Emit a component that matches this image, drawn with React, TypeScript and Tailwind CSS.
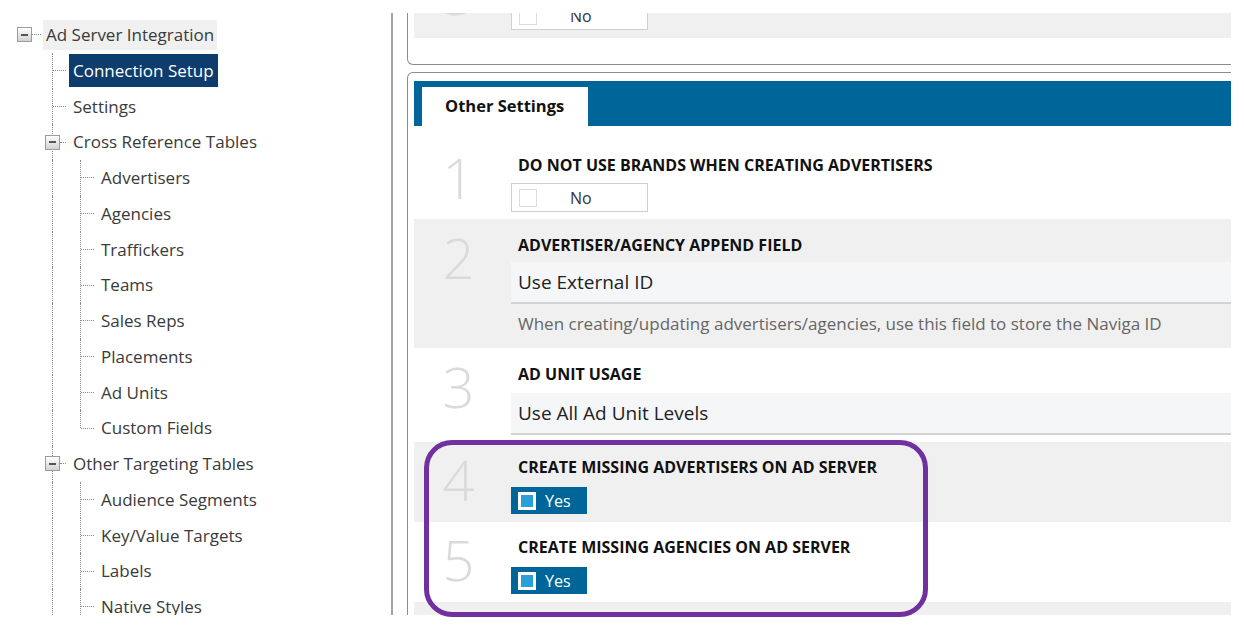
type Node = {
  label: string;
  level: 0 | 1 | 2;
  toggle?: boolean;
  selected?: boolean;
  hover?: boolean;
  last?: boolean;
};

const tree: Node[] = [
  { label: "Ad Server Integration", level: 0, toggle: true, hover: true },
  { label: "Connection Setup", level: 1, selected: true },
  { label: "Settings", level: 1 },
  { label: "Cross Reference Tables", level: 1, toggle: true },
  { label: "Advertisers", level: 2 },
  { label: "Agencies", level: 2 },
  { label: "Traffickers", level: 2 },
  { label: "Teams", level: 2 },
  { label: "Sales Reps", level: 2 },
  { label: "Placements", level: 2 },
  { label: "Ad Units", level: 2 },
  { label: "Custom Fields", level: 2, last: true },
  { label: "Other Targeting Tables", level: 1, toggle: true },
  { label: "Audience Segments", level: 2 },
  { label: "Key/Value Targets", level: 2 },
  { label: "Labels", level: 2 },
  { label: "Native Styles", level: 2 },
];

function Toggle() {
  return (
    <span className="relative z-10 flex h-[15px] w-[15px] shrink-0 items-center justify-center border border-[#9c9c9c] bg-linear-to-b from-white to-[#d2d2d2]">
      <span className="h-[2px] w-[7px] bg-[#555]" />
    </span>
  );
}

function TreeRow({ node }: { node: Node }) {
  const label = (
    <span
      className={
        node.selected
          ? "ml-[3px] flex h-[33px] items-center bg-[#0e3c6d] px-[4px] text-white"
          : node.hover
            ? "ml-[2px] flex h-[30px] items-center bg-[#f0f0f0] px-[3px]"
            : "ml-[3px] flex h-[33px] items-center px-[4px]"
      }
    >
      {node.label}
    </span>
  );

  if (node.level === 0) {
    return (
      <div className="flex h-[35.75px] items-center pl-[17px]">
        <Toggle />
        <span className="w-[9px] border-t border-dotted border-[#8a8a8a]" />
        {label}
      </div>
    );
  }

  return (
    <div className="flex h-[35.75px] items-stretch">
      <span className="w-[52px] shrink-0" />
      <span className="border-l border-dotted border-[#8a8a8a]" />
      {node.level === 2 && (
        <>
          <span className="w-[27px] shrink-0" />
          <span className="flex flex-col">
            <span
              className={
                node.last
                  ? "h-1/2 border-l border-dotted border-[#8a8a8a]"
                  : "h-full border-l border-dotted border-[#8a8a8a]"
              }
            />
          </span>
        </>
      )}
      <div className="flex items-center">
        {node.toggle ? (
          <>
            <span className="-ml-[8px]">
              <Toggle />
            </span>
            <span className="w-[6px] border-t border-dotted border-[#8a8a8a]" />
          </>
        ) : (
          <span className="w-[13px] border-t border-dotted border-[#8a8a8a]" />
        )}
        {label}
      </div>
    </div>
  );
}

function NoBox({ className = "" }: { className?: string }) {
  return (
    <div
      className={`flex h-[29px] w-[137px] items-center border border-[#cfcfcf] bg-white ${className}`}
    >
      <span className="ml-[7px] h-[18px] w-[18px] border border-[#dcdcdc]" />
      <span className="ml-[33px] text-[16px] text-[#333]">No</span>
    </div>
  );
}

function YesBox() {
  return (
    <div className="mt-[10px] flex h-[27px] w-[76px] items-center bg-[#006699]">
      <span className="ml-[7px] h-[18px] w-[18px] border-[3px] border-white bg-[#2a9fd8]" />
      <span className="ml-[9px] text-[16px] text-white">Yes</span>
    </div>
  );
}

function Field({ value, className = "" }: { value: string; className?: string }) {
  return (
    <div
      className={`flex h-[42px] items-center border-b-2 border-[#d3d3d3] bg-[#f5f6f8] pl-[7px] text-[19px] text-[#222] ${className}`}
    >
      {value}
    </div>
  );
}

function SettingRow({
  n,
  gray,
  pad,
  title,
  children,
}: {
  n: string;
  gray?: boolean;
  pad: string;
  title: string;
  children: React.ReactNode;
}) {
  return (
    <div className={`flex ${gray ? "bg-[#f0f0f0]" : "bg-white"} ${pad}`}>
      <div className="w-[97px] shrink-0 pr-[8px] text-center">
        <div className="-mt-[6px] text-[56px] font-light leading-none text-[#dadada]">{n}</div>
      </div>
      <div className="min-w-0 flex-1">
        <div className="h-[20px] pl-[7px] text-[16px] font-bold uppercase leading-[20px] text-[#111]">
          {title}
        </div>
        {children}
      </div>
    </div>
  );
}

export default function App() {
  return (
    <div
      className="relative h-[630px] w-[1244px] overflow-hidden bg-white pt-[13px] text-[#3a3a3a]"
      style={{ fontFamily: '"Open Sans", "Noto Sans", sans-serif' }}
    >
      <div className="flex h-[602px] w-[1231px] overflow-hidden">
        <aside className="w-[391px] shrink-0 pt-[4px] text-[17px]">
          {tree.map((node) => (
            <TreeRow key={node.label} node={node} />
          ))}
        </aside>
        <div className="w-[2px] shrink-0 bg-[#a3a3a3]" />
        <main className="min-w-0 flex-1 pl-[14px]">
          <div className="-mr-[7px]">
            <div className="rounded-b-[6px] border-x border-b border-[#8c8c8c] px-[6px] pb-[26px]">
              <div className="flex h-[25px] bg-[#f0f0f0]">
                <div className="w-[97px] shrink-0 pr-[8px] text-center">
                  <div className="-mt-[48px] text-[56px] font-light leading-none text-[#dadada]">3</div>
                </div>
                <div>
                  <NoBox className="-mt-[12px]" />
                </div>
              </div>
            </div>

            <div className="mt-[7px] rounded-t-[6px] border-x border-t border-[#8c8c8c] px-[6px] pt-[8px]">
              <div className="h-[45px] bg-[#006699] pl-[8px] pt-[6px]">
                <div className="flex h-[39px] w-[166px] items-center bg-white pl-[23px] text-[16.5px] font-bold text-[#111]">
                  Other Settings
                </div>
              </div>

              <SettingRow n="1" pad="pt-[29px] pb-[7px]" title="Do not use brands when creating advertisers">
                <NoBox className="mt-[8px]" />
              </SettingRow>

              <SettingRow n="2" gray pad="pt-[16px] pb-[14px]" title="Advertiser/Agency append field">
                <Field value="Use External ID" className="mt-[7px]" />
                <div className="mt-[10px] h-[20px] whitespace-nowrap pl-[7px] text-[17px] leading-[20px] text-[#666]">
                  When creating/updating advertisers/agencies, use this field to store the Naviga ID
                </div>
              </SettingRow>

              <SettingRow n="3" pad="pt-[16px] pb-[7px]" title="Ad unit usage">
                <Field value="Use All Ad Unit Levels" className="mt-[9px]" />
              </SettingRow>

              <SettingRow n="4" gray pad="pt-[15px] pb-[8px]" title="Create missing advertisers on ad server">
                <YesBox />
              </SettingRow>

              <SettingRow n="5" pad="pt-[15px] pb-[8px]" title="Create missing agencies on ad server">
                <YesBox />
              </SettingRow>

              <div className="h-[40px] bg-[#f0f0f0]" />
            </div>
          </div>
        </main>
      </div>

      <div className="pointer-events-none absolute left-[424px] top-[440px] h-[177px] w-[504px] rounded-[28px] border-[5px] border-[#7030a0]" />
    </div>
  );
}
